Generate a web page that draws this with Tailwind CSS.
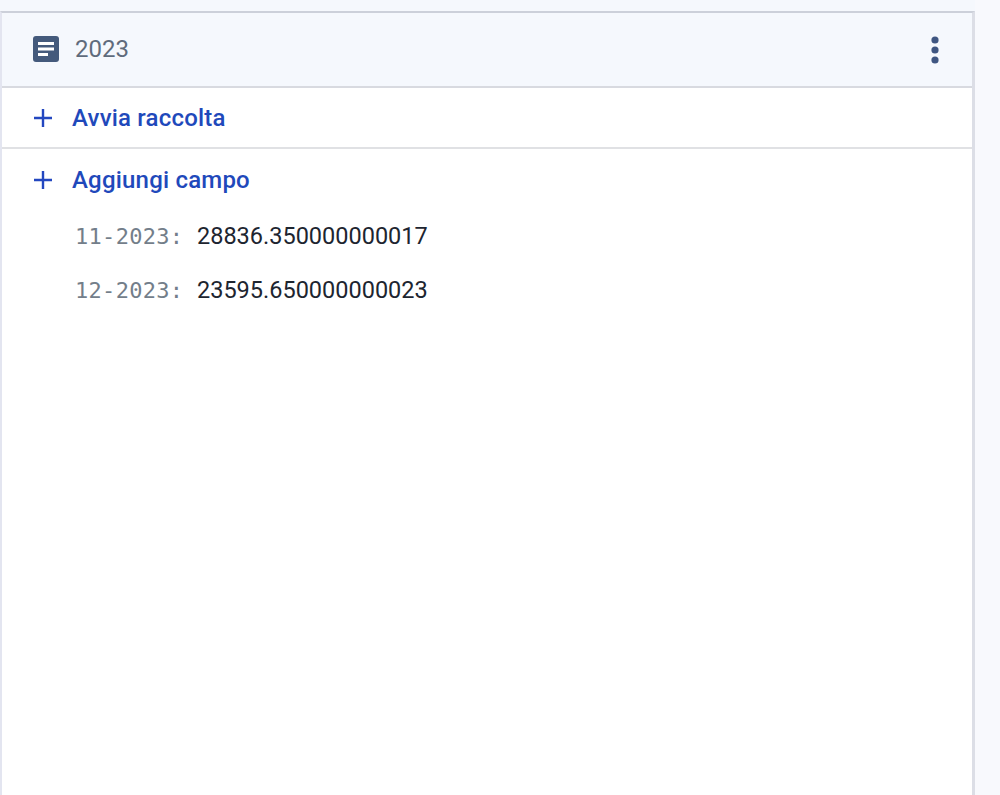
<!DOCTYPE html>
<html lang="it">
<head>
    <meta charset="utf-8">
    <title>2023</title>
    <script src="https://cdn.jsdelivr.net/npm/@tailwindcss/browser@4"></script>
</head>
<body class="bg-[#f8f9fd] overflow-hidden font-['Roboto',sans-serif]">
    <div class="w-[975px] h-[795px] flex flex-col">
        <div class="h-[11px] bg-[#f5f8fd]"></div>
        <div class="flex-1 bg-white border-t-2 border-l-2 border-r-[3px] border-t-[#ccd0da] border-l-[#e3e5f0] border-r-[#dcdee6] flex flex-col">
            <!-- En-tete du document -->
            <div class="h-[75px] bg-[#f5f8fd] border-b-2 border-[#d8dae0] flex items-center pl-[30px] pr-[33px]">
                <svg class="w-[28px] h-[28px] shrink-0 -translate-y-px" viewBox="0 0 28 28">
                    <rect x="1" y="1" width="26" height="26" rx="3" fill="#445a7c"/>
                    <rect x="6" y="7" width="16" height="3" fill="#fff"/>
                    <rect x="6" y="12.5" width="16" height="3" fill="#fff"/>
                    <rect x="6" y="18" width="10" height="3" fill="#fff"/>
                </svg>
                <span class="ml-[15px] text-[24px] text-[#5f6b7c] -translate-y-px">2023</span>
                <svg class="ml-auto w-[8px] h-[28px]" viewBox="0 0 8 28" fill="#3f5682">
                    <circle cx="4" cy="4" r="3.6"/>
                    <circle cx="4" cy="14" r="3.6"/>
                    <circle cx="4" cy="24" r="3.6"/>
                </svg>
            </div>

            <!-- Avvia raccolta -->
            <div class="h-[61px] border-b-2 border-[#e0e1e4] flex items-center pl-[32px]">
                <svg class="w-[18px] h-[18px] shrink-0" viewBox="0 0 18 18" stroke="#2347c0" stroke-width="2.4" fill="none">
                    <path d="M0 9H18M9 0V18"/>
                </svg>
                <span class="ml-[20px] text-[24px] font-medium text-[#1f49bb] tracking-[0.2px]">Avvia raccolta</span>
            </div>

            <!-- Aggiungi campo -->
            <div class="h-[61px] flex items-center pl-[32px]">
                <svg class="w-[18px] h-[18px] shrink-0" viewBox="0 0 18 18" stroke="#2347c0" stroke-width="2.4" fill="none">
                    <path d="M0 9H18M9 0V18"/>
                </svg>
                <span class="ml-[20px] text-[24px] font-medium text-[#1f49bb] tracking-[0.2px]">Aggiungi campo</span>
            </div>

            <!-- Champs -->
            <div class="pl-[73px] flex flex-col">
                <div class="h-[54px] flex items-center">
                    <span class="w-[122px] font-['DejaVu_Sans_Mono',monospace] text-[22px] tracking-[0.3px] text-[#737e8a] -translate-y-px">11-2023:</span>
                    <span class="text-[23.5px] text-[#1d2530]">28836.350000000017</span>
                </div>
                <div class="h-[54px] flex items-center">
                    <span class="w-[122px] font-['DejaVu_Sans_Mono',monospace] text-[22px] tracking-[0.3px] text-[#737e8a] -translate-y-px">12-2023:</span>
                    <span class="text-[23.5px] text-[#1d2530]">23595.650000000023</span>
                </div>
            </div>
        </div>
    </div>
</body>
</html>
